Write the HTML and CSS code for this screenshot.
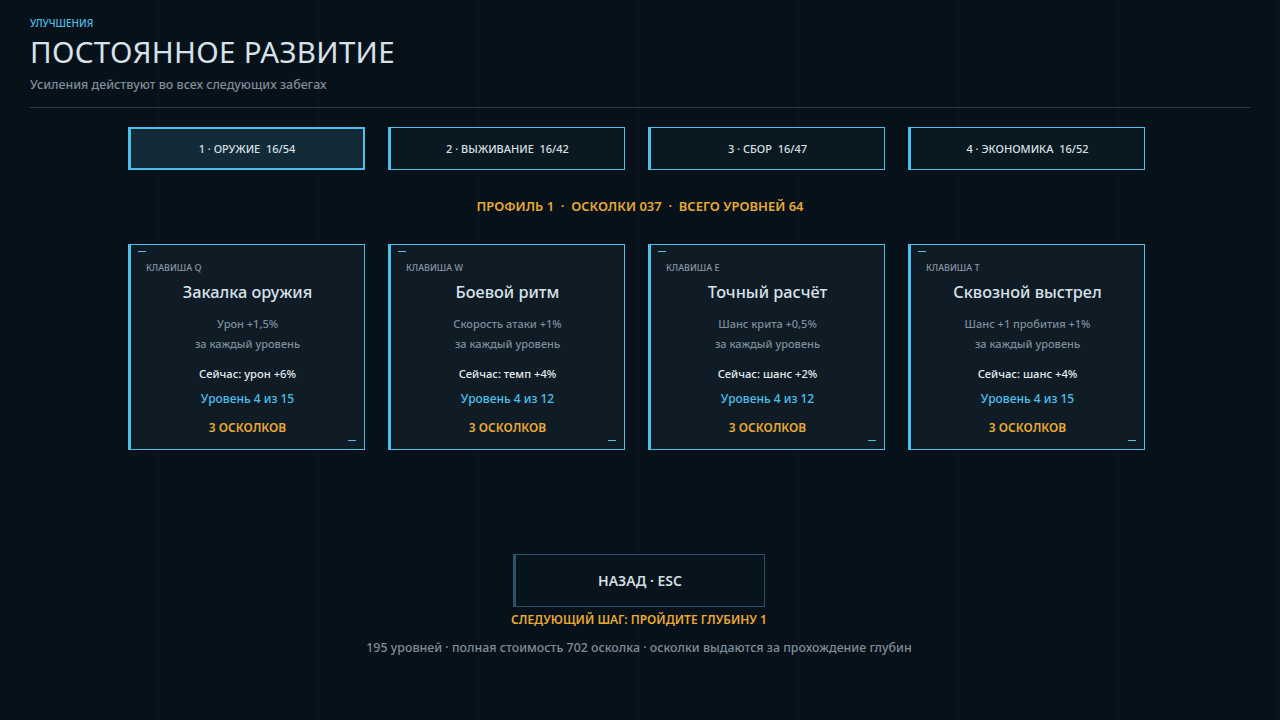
FILE: index.html
```html
<!DOCTYPE html>
<html lang="ru">
<head>
    <meta charset="UTF-8">
    <meta name="viewport" content="width=device-width, initial-scale=1.0">
    <title>Улучшения</title>
    <link rel="stylesheet" href="styles.css">
</head>
<body>
    <div class="screen">
        <!-- Заголовок -->
        <header class="head">
            <div class="overline">УЛУЧШЕНИЯ</div>
            <h1 class="title">ПОСТОЯННОЕ РАЗВИТИЕ</h1>
            <div class="subtitle">Усиления действуют во всех следующих забегах</div>
        </header>

        <!-- Вкладки категорий -->
        <nav class="tabs">
            <div class="tab active">1 · ОРУЖИЕ&nbsp; 16/54</div>
            <div class="tab">2 · ВЫЖИВАНИЕ&nbsp; 16/42</div>
            <div class="tab">3 · СБОР&nbsp; 16/47</div>
            <div class="tab">4 · ЭКОНОМИКА&nbsp; 16/52</div>
        </nav>

        <div class="stats">ПРОФИЛЬ 1 &nbsp;·&nbsp; ОСКОЛКИ 037 &nbsp;·&nbsp; ВСЕГО УРОВНЕЙ 64</div>

        <!-- Карточки улучшений -->
        <div class="cards">
            <div class="card">
                <div class="card-key">КЛАВИША Q</div>
                <div class="card-name">Закалка оружия</div>
                <div class="card-desc first">Урон +1,5%</div>
                <div class="card-desc">за каждый уровень</div>
                <div class="card-now">Сейчас: урон +6%</div>
                <div class="card-level">Уровень 4 из 15</div>
                <div class="card-cost">3 ОСКОЛКОВ</div>
            </div>
            <div class="card">
                <div class="card-key">КЛАВИША W</div>
                <div class="card-name">Боевой ритм</div>
                <div class="card-desc first">Скорость атаки +1%</div>
                <div class="card-desc">за каждый уровень</div>
                <div class="card-now">Сейчас: темп +4%</div>
                <div class="card-level">Уровень 4 из 12</div>
                <div class="card-cost">3 ОСКОЛКОВ</div>
            </div>
            <div class="card">
                <div class="card-key">КЛАВИША E</div>
                <div class="card-name">Точный расчёт</div>
                <div class="card-desc first">Шанс крита +0,5%</div>
                <div class="card-desc">за каждый уровень</div>
                <div class="card-now">Сейчас: шанс +2%</div>
                <div class="card-level">Уровень 4 из 12</div>
                <div class="card-cost">3 ОСКОЛКОВ</div>
            </div>
            <div class="card">
                <div class="card-key">КЛАВИША T</div>
                <div class="card-name">Сквозной выстрел</div>
                <div class="card-desc first">Шанс +1 пробития +1%</div>
                <div class="card-desc">за каждый уровень</div>
                <div class="card-now">Сейчас: шанс +4%</div>
                <div class="card-level">Уровень 4 из 15</div>
                <div class="card-cost">3 ОСКОЛКОВ</div>
            </div>
        </div>

        <!-- Нижняя часть -->
        <footer class="bottom">
            <button class="back-btn">НАЗАД · ESC</button>
            <div class="next-step">СЛЕДУЮЩИЙ ШАГ: ПРОЙДИТЕ ГЛУБИНУ 1</div>
            <div class="summary">195 уровней · полная стоимость 702 осколка · осколки выдаются за прохождение глубин</div>
        </footer>
    </div>
</body>
</html>
```

FILE: styles.css
```css
html, body {
    margin: 0;
    height: 100%;
}

body {
    font-family: "Noto Sans", "Open Sans", sans-serif;
    background-color: #07111a;
    background-image: linear-gradient(to right, rgba(40, 70, 90, 0.12) 1px, transparent 1px);
    background-size: 160px 100%;
    background-position: -2px 0;
    color: #d6e0e8;
    overflow: hidden;
}

.screen {
    width: 1280px;
    height: 720px;
    padding: 0 30px;
    box-sizing: border-box;
}

/* Заголовок */
.head {
    padding-top: 16px;
    padding-bottom: 14px;
    border-bottom: 1px solid #26404f;
}

.overline {
    color: #4cc0ea;
    font-size: 10px;
    font-weight: 500;
    line-height: 14px;
}

.title {
    margin: 2px 0 0;
    font-size: 29.5px;
    font-weight: 400;
    line-height: 40px;
    color: #d8e2ea;
    letter-spacing: 0.3px;
}

.subtitle {
    margin-top: 4px;
    font-size: 12.4px;
    font-weight: 500;
    line-height: 17px;
    color: #7d8e9a;
}

/* Вкладки */
.tabs {
    display: flex;
    justify-content: center;
    gap: 23px;
    margin-top: 19px;
    padding-right: 7px;
}

.tab {
    width: 237px;
    height: 43px;
    box-sizing: border-box;
    display: flex;
    align-items: center;
    justify-content: center;
    background-color: #0a1822;
    border: 1px solid #4cc0ea;
    border-left-width: 3px;
    font-size: 11px;
    font-weight: 500;
    color: #d8e0e6;
}

.tab.active {
    background-color: #132a38;
    border-width: 2px 2px 2px 3px;
}

.stats {
    margin-top: 27px;
    text-align: center;
    font-size: 13px;
    font-weight: 600;
    line-height: 18px;
    color: #e8aa32;
}

/* Карточки */
.cards {
    display: flex;
    justify-content: center;
    gap: 23px;
    margin-top: 29px;
    padding-right: 7px;
}

.card {
    position: relative;
    width: 237px;
    height: 206px;
    box-sizing: border-box;
    padding: 16px 0 0 15px;
    background-color: #0f1c26;
    border: 1px solid #4cc0ea;
    border-left-width: 3px;
    text-align: center;
}

/* уголки на карточке */
.card::before,
.card::after {
    content: "";
    position: absolute;
    width: 8px;
    height: 1px;
    background-color: #4cc0ea;
}

.card::before {
    top: 6px;
    left: 7px;
}

.card::after {
    bottom: 8px;
    right: 8px;
}

.card-key {
    text-align: left;
    font-size: 9px;
    font-weight: 500;
    line-height: 14px;
    color: #8795a0;
}

.card-name {
    margin: 5px 15px 0 0;
    font-size: 16.3px;
    font-weight: 500;
    line-height: 24px;
    color: #d8e2ea;
}

.card-desc {
    margin-right: 15px;
    font-size: 11px;
    font-weight: 500;
    line-height: 20px;
    color: #7d8e9a;
}

.card-desc.first {
    margin-top: 10px;
}

.card-now {
    margin: 11px 15px 0 0;
    font-size: 11.2px;
    font-weight: 500;
    line-height: 18px;
    color: #e4ebf0;
}

.card-level {
    margin: 7px 15px 0 0;
    font-size: 12px;
    font-weight: 500;
    line-height: 18px;
    color: #4cc0ea;
}

.card-cost {
    margin: 11px 15px 0 0;
    font-size: 12px;
    font-weight: 600;
    line-height: 18px;
    color: #e8aa32;
}

/* Нижняя часть */
.bottom {
    display: flex;
    flex-direction: column;
    align-items: center;
    margin-top: 104px;
    padding-right: 2px;
}

.back-btn {
    width: 252px;
    height: 53px;
    background-color: #08141c;
    border: 1px solid #2b5168;
    border-left-width: 3px;
    font-family: inherit;
    font-size: 14px;
    font-weight: 600;
    color: #d4dde4;
    cursor: pointer;
}

.next-step {
    margin-top: 4px;
    font-size: 12px;
    font-weight: 600;
    line-height: 18px;
    color: #e8aa32;
}

.summary {
    margin-top: 10px;
    font-size: 12.4px;
    font-weight: 500;
    line-height: 18px;
    color: #7d8e9a;
}
```
